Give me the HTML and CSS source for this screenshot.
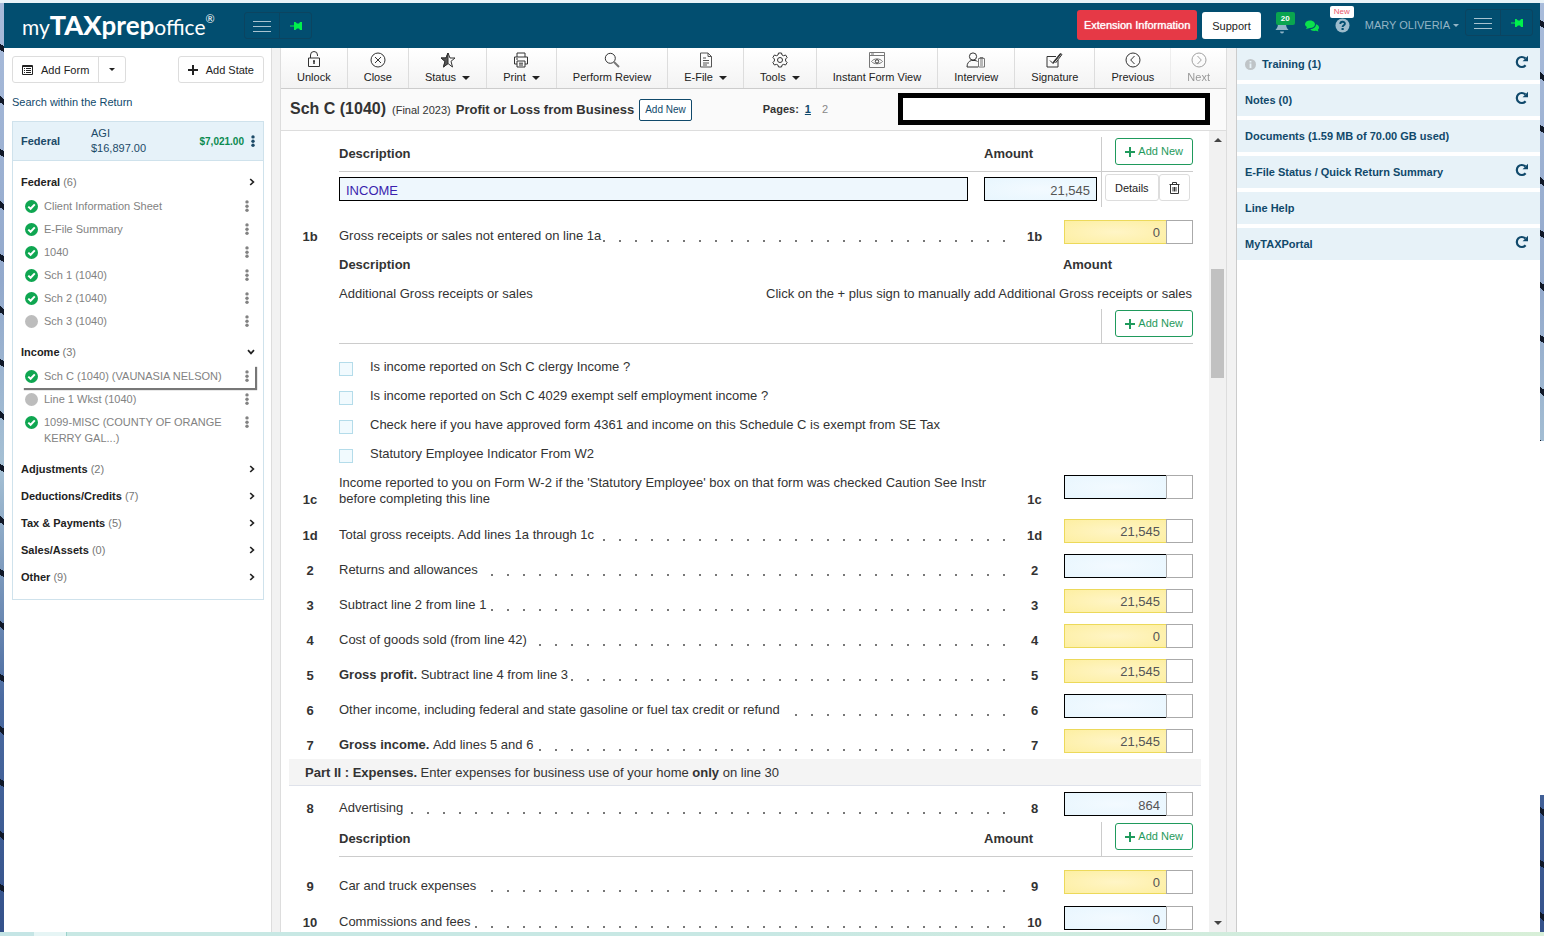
FILE: index.html
```html
<!DOCTYPE html>
<html lang="en">
<head>
<meta charset="utf-8">
<title>myTAXprepoffice - Sch C (1040)</title>
<link rel="stylesheet" href="styles.css">
</head>
<body>
<svg class="sprite" aria-hidden="true">
  <symbol id="burger" viewBox="0 0 18 12"><path d="M0 1.500h18M0 6.500h18M0 11.500h18" stroke="currentColor" stroke-width="1"/></symbol>
  <symbol id="pin" viewBox="0 0 12 10"><path d="M0 4.400h4V1h1.500l1.500 1.600h2L10 1h2v8h-2L9 7.400H7L5.500 9H4V5.600H0z" fill="#00f04c"/></symbol>
  <symbol id="check" viewBox="0 0 13 13"><circle cx="6.500" cy="6.500" r="6.500" fill="#0fa651"/><path d="M3.300 6.600l2.300 2.200L9.800 4.400" stroke="#fff" stroke-width="2" fill="none"/></symbol>
  <symbol id="blank" viewBox="0 0 13 13"><circle cx="6.500" cy="6.500" r="6.500" fill="#bdbdbd"/></symbol>
  <symbol id="dots" viewBox="0 0 4 12"><g fill="currentColor"><circle cx="2" cy="1.900" r="1.700"/><circle cx="2" cy="6.200" r="1.700"/><circle cx="2" cy="10.300" r="1.700"/></g></symbol>
  <symbol id="right" viewBox="0 0 6 8"><path d="M1.200 1L4.400 4 1.200 7" stroke="#222" stroke-width="1.700" fill="none"/></symbol>
  <symbol id="down" viewBox="0 0 8 6"><path d="M1 1.200L4 4.400 7 1.200" stroke="#222" stroke-width="1.700" fill="none"/></symbol>
  <symbol id="plus" viewBox="0 0 10 10"><path d="M5 0v10M0 5h10" stroke="currentColor" stroke-width="2"/></symbol>
  <symbol id="reload" viewBox="0 0 14 14"><path d="M10.600 10.300A5 5 0 1 1 10.300 3.400" stroke="currentColor" stroke-width="2.200" fill="none"/><path d="M13 .8v5.400H7.600z" fill="currentColor"/></symbol>
</svg>

<div class="app">
  <header class="top">
    <h1 class="logo"><span class="thin">my</span><span class="heavy">TAX</span><span class="semi">prep</span><span class="thin">office</span><sup>®</sup></h1>
    <div class="pair">
      <button aria-label="Menu"><svg width="18" height="12"><use href="#burger"/></svg></button>
      <button aria-label="Pin menu"><svg width="12" height="10"><use href="#pin"/></svg></button>
    </div>
    <div class="top-right">
      <button class="ext">Extension Information</button>
      <button class="support">Support</button>
      <button class="bell" aria-label="Notifications"><svg width="14" height="16" viewBox="0 0 14 16"><path d="M7 0C4 .5 3 2.500 3 5c0 4-1 5-2.500 7h13C12 10 11 9 11 5c0-2.500-1-4.500-4-5z" fill="#8fb3c6"/><path d="M5 13.500h4a2 2 0 0 1-4 0z" fill="#8fb3c6"/></svg><span class="badge">20</span></button>
      <button class="chat" aria-label="Chat"><svg width="14" height="12" viewBox="0 0 14 12"><path d="M5 .5c2.800 0 5 1.700 5 3.800S7.800 8 5 8L1 9l1-2C.8 6.300 0 5.400 0 4.300 0 2.200 2.200.5 5 .5z" fill="#0be04c"/><path d="M11 4.200c2 .6 3 1.700 3 3.200 0 1-.5 1.700-1.200 2.300l.7 1.800-2.500-.7C8 11.300 5.800 10.400 5.300 9 8.500 9 11 7 11 4.200z" fill="#0be04c"/></svg></button>
      <button class="help" aria-label="Help"><svg width="15" height="15" viewBox="0 0 15 15"><circle cx="7.500" cy="7.500" r="7" fill="#9dbccc"/><path d="M5.300 6c0-3 4.600-2.900 4.600-.3 0 1.600-2.300 1.700-2.300 3.300" stroke="#024e70" stroke-width="1.900" fill="none"/><rect x="6.500" y="10" width="2.200" height="2" fill="#024e70"/></svg><span class="new">New</span></button>
      <button class="user">MARY OLIVERIA<i class="caret"></i></button>
      <div class="pair up">
        <button aria-label="Menu"><svg width="18" height="12"><use href="#burger"/></svg></button>
        <button aria-label="Pin panel"><svg width="12" height="10"><use href="#pin"/></svg></button>
      </div>
    </div>
  </header>

  <aside class="side">
    <div class="side-actions">
      <div class="split">
        <button><svg width="11" height="10" viewBox="0 0 11 10"><path d="M.5.500h10v9H.5z" fill="none" stroke="#222"/><path d="M0 1.500h11" stroke="#222"/><path d="M2 3.500h1M2 5.500h1M2 7.500h1M4 3.500h5M4 5.500h5M4 7.500h5" stroke="#222"/></svg>Add Form</button>
        <button aria-label="More forms"><i class="caret"></i></button>
      </div>
      <button class="add-state"><svg width="10" height="10"><use href="#plus"/></svg>Add State</button>
    </div>
    <a class="search" href="#">Search within the Return</a>
    <nav class="tree">
      <div class="agi">
        <b>Federal</b>
        <span>AGI<br>$16,897.00</span>
        <strong>$7,021.00</strong>
        <button aria-label="Federal options"><svg width="4" height="12"><use href="#dots"/></svg></button>
      </div>
      <div class="groups">
        <section>
          <button class="group"><b>Federal</b> (6)<svg width="6" height="8"><use href="#right"/></svg></button>
          <ul>
            <li><svg width="13" height="13"><use href="#check"/></svg><a href="#">Client Information Sheet</a><svg width="4" height="12"><use href="#dots"/></svg></li>
            <li><svg width="13" height="13"><use href="#check"/></svg><a href="#">E-File Summary</a><svg width="4" height="12"><use href="#dots"/></svg></li>
            <li><svg width="13" height="13"><use href="#check"/></svg><a href="#">1040</a><svg width="4" height="12"><use href="#dots"/></svg></li>
            <li><svg width="13" height="13"><use href="#check"/></svg><a href="#">Sch 1 (1040)</a><svg width="4" height="12"><use href="#dots"/></svg></li>
            <li><svg width="13" height="13"><use href="#check"/></svg><a href="#">Sch 2 (1040)</a><svg width="4" height="12"><use href="#dots"/></svg></li>
            <li><svg width="13" height="13"><use href="#blank"/></svg><a href="#">Sch 3 (1040)</a><svg width="4" height="12"><use href="#dots"/></svg></li>
          </ul>
        </section>
        <section>
          <button class="group"><b>Income</b> (3)<svg width="8" height="6"><use href="#down"/></svg></button>
          <ul>
            <li class="current"><svg width="13" height="13"><use href="#check"/></svg><a href="#">Sch C (1040) (VAUNASIA NELSON)</a><svg width="4" height="12"><use href="#dots"/></svg></li>
            <li><svg width="13" height="13"><use href="#blank"/></svg><a href="#">Line 1 Wkst (1040)</a><svg width="4" height="12"><use href="#dots"/></svg></li>
            <li><svg width="13" height="13"><use href="#check"/></svg><a href="#">1099-MISC (COUNTY OF ORANGE KERRY GAL...)</a><svg width="4" height="12"><use href="#dots"/></svg></li>
          </ul>
        </section>
        <button class="group"><b>Adjustments</b> (2)<svg width="6" height="8"><use href="#right"/></svg></button>
        <button class="group"><b>Deductions/Credits</b> (7)<svg width="6" height="8"><use href="#right"/></svg></button>
        <button class="group"><b>Tax &amp; Payments</b> (5)<svg width="6" height="8"><use href="#right"/></svg></button>
        <button class="group"><b>Sales/Assets</b> (0)<svg width="6" height="8"><use href="#right"/></svg></button>
        <button class="group"><b>Other</b> (9)<svg width="6" height="8"><use href="#right"/></svg></button>
      </div>
    </nav>
  </aside>

  <main class="main">
    <div class="toolbar">
      <button><svg width="12" height="17" viewBox="0 0 12 17"><path d="M2.500 7V4a3.500 3.500 0 0 1 7 0v1M.5 7h11v8.500H.5z"/><path d="M6 10.500v2.500M5 10h2" stroke-width="1.500"/></svg><span>Unlock</span></button>
      <button><svg width="16" height="16" viewBox="0 0 16 16"><circle cx="8" cy="8" r="7"/><path d="M5 5l6 6M11 5l-6 6"/></svg><span>Close</span></button>
      <button><svg width="16" height="16" viewBox="0 0 16 16"><path d="M8 1l2 5h5l-4 3.300L12.500 15 8 11.500 3.500 15 5 9.300 1 6h5z"/><path d="M8 1v10.500L3.500 15 5 9.300 1 6h5z" fill="#555"/></svg><span>Status<i class="caret"></i></span></button>
      <button><svg width="16" height="16" viewBox="0 0 16 16"><path d="M4 5V1h8v4M4 12H1.500V5h13v7H12M4 9h8v6H4zM6 11.200h4M6 13h4M3 7h2"/></svg><span>Print<i class="caret"></i></span></button>
      <button><svg width="16" height="16" viewBox="0 0 16 16"><circle cx="6.300" cy="6.300" r="5"/><path d="M10 10l5 5" stroke-width="2" stroke="#777"/></svg><span>Perform Review</span></button>
      <button><svg width="12" height="16" viewBox="0 0 12 16"><path d="M.5 1h7.500l3.500 3.500V15H.5zM8 1v3.500h3.500M3 6h3M3 8.500h6M3 11h6M3 13h4" stroke="#555"/></svg><span>E-File<i class="caret"></i></span></button>
      <button><svg width="16" height="16" viewBox="0 0 16 16"><path d="M6.500 1h3l.5 2 1.600.7 2-.7 1.500 2.500L13.600 7v2l1.500 1.500-1.500 2.500-2-.6-1.600.7-.5 1.900h-3L6 13.100l-1.600-.7-2 .6L.9 10.500 2.400 9V7L.9 5.500 2.400 3l2 .7L6 3z"/><circle cx="8" cy="8" r="2.500"/></svg><span>Tools<i class="caret"></i></span></button>
      <button><svg width="16" height="16" viewBox="0 0 16 16"><g stroke="#777"><path d="M.5.500h15v15H.5zM.5 3.500h15M2 2h3M2.500 9.500C5 6 11 6 13.500 9.500 11 12.500 5 12.500 2.500 9.500z"/><circle cx="8" cy="9.400" r="1.700" stroke="#333"/></g></svg><span>Instant Form View</span></button>
      <button><svg width="20" height="16" viewBox="0 0 20 16"><circle cx="7" cy="4.500" r="3.600"/><path d="M12 15H1c0-4 2-6 4.500-6.500H9c1 .2 2 .5 2.500 1"/><path d="M12.500 6.500h6V15h-6zM14 5.500h3v1.500h-3zM14 9h3M14 11h3M14 13h3" stroke="#777"/></svg><span>Interview</span></button>
      <button><svg width="17" height="16" viewBox="0 0 17 16"><path d="M10 4.500H1V15h11V8"/><path d="M4 8.500l3 3 7.500-10 1.500 1-6.500 8.500"/><path d="M7 11L14.500 2" stroke-width="1.600"/></svg><span>Signature</span></button>
      <button><svg width="16" height="16" viewBox="0 0 16 16"><circle cx="8" cy="8" r="7"/><path d="M9.500 4L5.700 8l3.800 4"/></svg><span>Previous</span></button>
      <button class="off"><svg width="16" height="16" viewBox="0 0 16 16"><circle cx="8" cy="8" r="7"/><path d="M6.500 4l3.800 4-3.800 4"/></svg><span>Next</span></button>
    </div>

    <div class="title">
      <h2>Sch C (1040)</h2>
      <small>(Final 2023)</small>
      <h3>Profit or Loss from Business</h3>
      <button>Add New</button>
      <span class="pages"><b>Pages:</b><a class="on" href="#">1</a><a href="#">2</a></span>
      <div class="redacted"></div>
    </div>

    <div class="scroller">
      <div class="form">
        <div class="entry head"><b>Description</b><b>Amount</b><div class="act"><button class="add"><svg width="10" height="10"><use href="#plus"/></svg>Add New</button></div></div>
        <div class="entry values">
          <input class="box desc" aria-label="Description" value="INCOME">
          <input class="box" aria-label="Amount" value="21,545">
          <div class="act"><button class="mini">Details</button><button class="mini trash" aria-label="Delete"><svg width="11" height="12" viewBox="0 0 11 12"><path d="M.5 2.500h10M3.500 2.500v-2h4v2M1.500 3v8.500h8V3M4 5v4.500M5.500 5v4.500M7 5v4.500" stroke="#333" fill="none"/></svg></button></div>
        </div>

        <div class="line"><b>1b</b><label for="l1b">Gross receipts or sales not entered on line 1a</label><b>1b</b><div class="field"><input id="l1b" class="box calc" value="0"><input class="flag" aria-label="1b flag"></div></div>

        <div class="sub"><b>Description</b><b>Amount</b></div>
        <div class="sub note"><span>Additional Gross receipts or sales</span><span>Click on the + plus sign to manually add Additional Gross receipts or sales</span></div>
        <div class="entry head"><b></b><b></b><div class="act"><button class="add"><svg width="10" height="10"><use href="#plus"/></svg>Add New</button></div></div>

        <div class="checks">
          <label><input type="checkbox"><span>Is income reported on Sch C clergy Income ?</span></label>
          <label><input type="checkbox"><span>Is income reported on Sch C 4029 exempt self employment income ?</span></label>
          <label><input type="checkbox"><span>Check here if you have approved form 4361 and income on this Schedule C is exempt from SE Tax</span></label>
          <label><input type="checkbox"><span>Statutory Employee Indicator From W2</span></label>
        </div>

        <div class="line tall"><b>1c</b><label for="l1c"><span>Income reported to you on Form W-2 if the 'Statutory Employee' box on that form was checked Caution See Instr before completing this line</span></label><b>1c</b><div class="field"><input id="l1c" class="box"><input class="flag" aria-label="1c flag"></div></div>
        <div class="line"><b>1d</b><label for="l1d">Total gross receipts. Add lines 1a through 1c</label><b>1d</b><div class="field"><input id="l1d" class="box calc" value="21,545"><input class="flag" aria-label="1d flag"></div></div>
        <div class="line"><b>2</b><label for="l2">Returns and allowances</label><b>2</b><div class="field"><input id="l2" class="box"><input class="flag" aria-label="2 flag"></div></div>
        <div class="line"><b>3</b><label for="l3">Subtract line 2 from line 1</label><b>3</b><div class="field"><input id="l3" class="box calc" value="21,545"><input class="flag" aria-label="3 flag"></div></div>
        <div class="line"><b>4</b><label for="l4">Cost of goods sold (from line 42)</label><b>4</b><div class="field"><input id="l4" class="box calc" value="0"><input class="flag" aria-label="4 flag"></div></div>
        <div class="line"><b>5</b><label for="l5"><b>Gross profit.</b>&nbsp;Subtract line 4 from line 3</label><b>5</b><div class="field"><input id="l5" class="box calc" value="21,545"><input class="flag" aria-label="5 flag"></div></div>
        <div class="line"><b>6</b><label for="l6">Other income, including federal and state gasoline or fuel tax credit or refund</label><b>6</b><div class="field"><input id="l6" class="box"><input class="flag" aria-label="6 flag"></div></div>
        <div class="line"><b>7</b><label for="l7"><b>Gross income.</b>&nbsp;Add lines 5 and 6</label><b>7</b><div class="field"><input id="l7" class="box calc" value="21,545"><input class="flag" aria-label="7 flag"></div></div>

        <p class="part"><b>Part II : Expenses.</b> Enter expenses for business use of your home <b>only</b> on line 30</p>

        <div class="line"><b>8</b><label for="l8">Advertising</label><b>8</b><div class="field"><input id="l8" class="box" value="864"><input class="flag" aria-label="8 flag"></div></div>
        <div class="entry head"><b>Description</b><b>Amount</b><div class="act"><button class="add"><svg width="10" height="10"><use href="#plus"/></svg>Add New</button></div></div>
        <div class="line gap"><b>9</b><label for="l9">Car and truck expenses</label><b>9</b><div class="field"><input id="l9" class="box calc" value="0"><input class="flag" aria-label="9 flag"></div></div>
        <div class="line"><b>10</b><label for="l10">Commissions and fees</label><b>10</b><div class="field"><input id="l10" class="box" value="0"><input class="flag" aria-label="10 flag"></div></div>
      </div>
      <div class="bar"><i class="arrow-up"></i><div class="track"><div class="thumb"></div></div><i class="arrow-down"></i></div>
    </div>
  </main>

  <aside class="panel">
    <section><svg width="11" height="11" viewBox="0 0 11 11"><circle cx="5.500" cy="5.500" r="5.500" fill="#bfc4c7"/><path d="M5.500 2v1.600M5.500 4.500V9" stroke="#e7f2f8" stroke-width="1.800"/></svg><b>Training (1)</b><button aria-label="Refresh training"><svg width="14" height="14"><use href="#reload"/></svg></button></section>
    <section><b>Notes (0)</b><button aria-label="Refresh notes"><svg width="14" height="14"><use href="#reload"/></svg></button></section>
    <section><b>Documents (1.59 MB of 70.00 GB used)</b></section>
    <section><b>E-File Status / Quick Return Summary</b><button aria-label="Refresh e-file status"><svg width="14" height="14"><use href="#reload"/></svg></button></section>
    <section><b>Line Help</b></section>
    <section><b>MyTAXPortal</b><button aria-label="Refresh portal"><svg width="14" height="14"><use href="#reload"/></svg></button></section>
  </aside>
</div>
</body>
</html>
```
FILE: styles.css
```css
* { box-sizing: border-box; }
body {
  margin: 0;
  height: 100vh;
  padding: 3px 4px 4px;
  overflow: hidden;
  font: 11px/16px "Liberation Sans", Arial, sans-serif;
  color: #333;
  background:
    linear-gradient(#e9f3f8, #e9f3f8) top / 100% 3px no-repeat,
    linear-gradient(90deg, #c5e5e5 0 34px, #e6f5f5 34px 66px, #9cd3cc 66px 67px, #c8e8e4 67px 50%, #d8efd8) bottom / 100% 4px no-repeat,
    linear-gradient(#fff, #fff) right 0 top 441px / 4px 354px no-repeat,
    repeating-linear-gradient(35deg, transparent 0 38px, #101828 38px 43px),
    linear-gradient(#a9bcdb 0, #93a9cc 30%, #a5c0d4 50%, #4a6aa0 75%, #34518a);
}
button { font: inherit; color: inherit; background: none; border: 0; padding: 0; margin: 0; cursor: pointer; }
input { font: inherit; margin: 0; }
a { color: inherit; text-decoration: none; }
ul { list-style: none; margin: 0; padding: 0; }
h1, h2, h3, p { margin: 0; }
svg { display: block; flex: none; }
.sprite { position: absolute; width: 0; height: 0; }
.caret { display: inline-block; border: 3px solid transparent; border-top-color: currentColor; border-bottom: 0; }

.app {
  height: 100%;
  display: grid;
  grid-template: 45px minmax(0, 1fr) / 268px minmax(0, 1fr) 304px;
  background: #f2f2f2;
}

/* top bar */
.top { grid-column: 1 / -1; display: flex; align-items: flex-start; background: #024e70; color: #fff; }
.logo { width: 222px; margin-left: 18px; font: 22px/43px Lato, sans-serif; white-space: nowrap; }
.logo .thin { font-size: 21px; font-weight: 400; }
.logo .heavy { font-size: 27px; font-weight: 900; }
.logo .semi { font-size: 26px; font-weight: 700; }
.logo sup { font-size: 11px; line-height: 11px; vertical-align: 12px; }
.pair { display: flex; height: 27px; margin-top: 9px; border: 1px solid #0b4460; border-radius: 3px; color: #a9c3d0; }
.pair button { display: grid; place-items: center; width: 34px; }
.pair button + button { width: 32px; border-left: 1px solid #0b4460; }
.pair.up { margin-top: 6px; }
.top-right { display: flex; align-items: flex-start; margin-left: auto; margin-right: 7px; }
.ext { height: 30px; margin-top: 7px; padding: 0 7px; border-radius: 3px; background: #e63946; text-shadow: 0 0 1px #fff; }
.support { height: 27px; margin: 9px 0 0 5px; padding: 0 10px; border-radius: 3px; background: #fff; color: #222; }
.bell, .chat, .help { position: relative; margin-left: 14px; margin-top: 15px; height: 14px; }
.badge { position: absolute; left: 1px; top: -6px; width: 19px; border-radius: 2px; background: #0aa54f; font: bold 8px/13px "Liberation Sans", sans-serif; }
.chat { margin-left: 16px; margin-top: 16px; }
.help { margin-left: 16px; }
.new { position: absolute; left: -5px; top: -12px; width: 24px; border-radius: 2px; background: #fff; color: #e9576b; font-size: 8px; line-height: 12px; }
.user { margin: 14px 6px 0 15px; color: #94b5c6; white-space: nowrap; }
.user .caret { margin: 0 0 2px 3px; }

/* left sidebar */
.side { background: #fff; border-right: 1px solid #ddd; padding: 8px 7px 0 8px; }
.side-actions { display: flex; justify-content: space-between; height: 27px; color: #222; }
.side-actions button { display: flex; align-items: center; padding: 0 9px; }
.split { display: flex; border: 1px solid #ddd; border-radius: 3px; }
.split svg { margin-right: 8px; }
.split button + button { padding: 0 10px; border-left: 1px solid #ddd; }
.side-actions .add-state { border: 1px solid #ddd; border-radius: 3px; }
.add-state svg { margin-right: 8px; }
.search { display: block; margin: 11px 0; color: #10496b; }
.tree { border: 1px solid #cfe2ec; }
.agi { display: flex; align-items: center; height: 39px; padding: 0 8px; background: #e6f2f9; border-bottom: 1px solid #cfe2ec; color: #1c4a68; line-height: 15px; }
.agi b { width: 70px; }
.agi strong { margin-left: auto; margin-right: 7px; color: #0b8a50; font-size: 10px; }
.groups { padding: 7px 0 9px; }
.groups section { margin-bottom: 5px; }
.group { display: flex; align-items: center; width: 100%; height: 27px; padding: 0 8px; color: #777; white-space: pre; }
.group b { color: #222; }
.group svg { margin-left: auto; }
.groups li { display: flex; gap: 6px; margin-left: 9px; margin-right: 8px; padding: 3px 6px 4px 3px; color: #828282; }
.groups li a { flex: 1; }
.groups li svg { margin-top: 2px; }
.groups .current { background: #fff; box-shadow: 2px 2px 1px #777; }

/* form area */
.main { display: flex; flex-direction: column; min-width: 0; margin: 0 9px 0 8px; border: solid #ddd; border-width: 0 1px; background: #fff; }
.toolbar { display: flex; flex: none; height: 41px; border-bottom: 1px solid #ccc; background: linear-gradient(#fff, #f3f3f3); color: #222; }
.toolbar button { flex: 1 1 auto; display: grid; grid-template-rows: 23px 16px; place-items: center; padding: 0 11px; white-space: nowrap; }
.toolbar button + button { border-left: 1px solid #ddd; }
.toolbar svg { fill: none; stroke: #333; stroke-width: 1; }
.toolbar span { height: 20px; }
.toolbar .caret { margin: 0 0 1px 6px; border-width: 4px; border-bottom: 0; }
.toolbar .off { opacity: .45; }
.title { display: flex; flex: none; align-items: center; height: 42px; padding: 0 16px 2px 9px; border-bottom: 1px solid #ddd; background: #fafafa; white-space: nowrap; }
.title h2 { font-size: 16px; }
.title small { margin: 3px 5px 0 6px; font-size: 11px; }
.title h3 { margin-top: 2px; font-size: 13px; }
.title button { height: 22px; margin: 2px 0 0 5px; padding: 0 5px; border: 1px solid #10496b; border-radius: 2px; background: #fff; color: #10496b; font-size: 10px; }
.pages { display: flex; gap: 6px; margin-left: 71px; }
.pages a { color: #888; margin-right: 5px; }
.pages .on { color: #10496b; font-weight: bold; text-decoration: underline; }
.redacted { width: 312px; height: 32px; margin-left: auto; border: 5px solid #000; background: #fff; }

.scroller { display: flex; flex: 1; min-height: 0; }
.form { flex: 1; min-width: 0; padding: 6px 8px 0; overflow: hidden; font-size: 13px; }
.box { width: 103px; height: 24px; padding: 2px 6px 0; border: 1px solid #000; border-radius: 0; background: radial-gradient(#f3faff, #e8f6fe); color: #555; text-align: right; }
.calc { border-color: #ecd95a; background: radial-gradient(#fff5c6, #fdefa2); padding-top: 1px; }
.flag { width: 27px; height: 24px; margin-left: -1px; border: 1px solid #aaa; border-radius: 0; background: #fff; }
.field { display: flex; margin-top: 5px; }

.entry { display: grid; grid-template-columns: minmax(0, 1fr) 113px 80px; column-gap: 16px; margin: 0 8px 0 50px; }
.entry .act { display: flex; margin-left: -12px; border-left: 1px solid #ccc; }
.entry.head { height: 35px; border-bottom: 1px solid #ccc; line-height: 33px; }
.entry.head .act { justify-content: flex-end; padding-top: 1px; }
.add { display: flex; align-items: center; gap: 3px; height: 27px; padding: 0 9px; border: 1px solid #1f9a5c; border-radius: 3px; color: #1f9a5c; font-size: 11px; }
.entry.values { height: 35px; margin-bottom: 8px; align-items: start; }
.values .box { width: 100%; margin-top: 5px; }
.values .desc { color: #3a1fae; text-align: left; background: #eef7fd; }
.values .act { padding: 2px 0 6px 3px; }
.mini { height: 27px; padding: 0 9px; border: 1px solid #ddd; border-radius: 3px; color: #222; font-size: 11px; }

.line { display: grid; grid-template-columns: 42px minmax(0, 1fr) 59px 129px; min-height: 35px; padding-right: 8px; align-items: start; }
.line > b { padding-top: 14px; text-align: center; }
.line label { display: flex; padding: 13px 0 0 8px; white-space: nowrap; }
.line label::after { content: ""; flex: 1; height: 14px; margin-left: 1px; background: linear-gradient(#777, #777) right bottom / 16px 2px repeat-x; -webkit-mask: repeating-linear-gradient(270deg, #000 0 2px, transparent 2px 16px); mask: repeating-linear-gradient(270deg, #000 0 2px, transparent 2px 16px); }
.line.tall { min-height: 44px; }
.line.tall label { padding: 5px 0 0 8px; white-space: normal; }
.line.tall label::after { display: none; }
.line.tall > b { padding-top: 22px; }
.line.gap { margin-top: 8px; margin-bottom: 1px; }
.sub { display: flex; justify-content: space-between; margin-left: 50px; padding-right: 89px; line-height: 29px; }
.sub.note { padding-right: 9px; line-height: 30px; }
.checks { padding: 8px 0 2px 50px; }
.checks label { display: flex; align-items: center; height: 29px; gap: 17px; }
.checks input { appearance: none; width: 14px; height: 14px; margin-top: 4px; border: 1px solid #b4dcea; background: #f1fafe; }
.part { height: 27px; margin-bottom: 1px; padding-left: 16px; border-bottom: 1px solid #dfe2ea; background: #f4f4f4; line-height: 27px; }

.bar { display: flex; flex-direction: column; align-items: center; width: 17px; padding: 7px 0; background: #f1f1f1; }
.arrow-up { border: 4px solid transparent; border-bottom-color: #444; border-top: 0; }
.arrow-down { border: 4px solid transparent; border-top-color: #444; border-bottom: 0; }
.track { flex: 1; width: 13px; }
.thumb { height: 14%; margin-top: 127px; background: #c1c1c1; }

/* right panel */
.panel { display: flex; flex-direction: column; gap: 4px; border-left: 1px solid #ccc; background: #fff; color: #10496b; }
.panel section { display: flex; align-items: center; height: 32px; padding: 0 11px 0 8px; background: #e7f2f8; }
.panel section > svg { margin-right: 6px; }
.panel button { margin-left: auto; margin-bottom: 4px; }
```
